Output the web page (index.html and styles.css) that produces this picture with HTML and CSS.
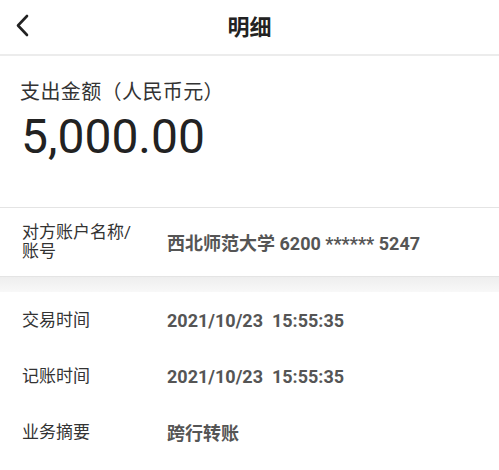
FILE: index.html
```html
<!DOCTYPE html>
<html lang="zh-CN">

<head>
    <meta charset="utf-8">
    <meta name="viewport" content="width=device-width, initial-scale=1.0">
    <title>明细</title>
    <link rel="stylesheet" href="styles.css">
</head>

<body>
    <header class="topbar">
        <button class="tilbage" aria-label="返回">
            <svg width="16" height="24" viewBox="0 0 16 24">
                <polyline points="12,2 3,11.5 12,21" fill="none" stroke="#222" stroke-width="2.6" stroke-linecap="round" stroke-linejoin="round" />
            </svg>
        </button>
        <h1>明细</h1>
    </header>

    <section class="beloeb">
        <p class="beloeb-tekst">支出金额（人民币元）</p>
        <p class="beloeb-tal">5,000.00</p>
    </section>

    <section class="modpart">
        <span class="navn">对方账户名称/<br>账号</span>
        <span class="vaerdi">西北师范大学 6200 ****** 5247</span>
    </section>

    <div class="skygge"></div>

    <section class="detaljer">
        <div class="raekke">
            <span class="navn">交易时间</span>
            <span class="vaerdi">2021/10/23&nbsp; 15:55:35</span>
        </div>
        <div class="raekke">
            <span class="navn">记账时间</span>
            <span class="vaerdi">2021/10/23&nbsp; 15:55:35</span>
        </div>
        <div class="raekke">
            <span class="navn">业务摘要</span>
            <span class="vaerdi">跨行转账</span>
        </div>
    </section>
</body></html>
```

FILE: styles.css
```css
* {
    box-sizing: border-box;
}

body {
    margin: 0;
    background-color: #fff;
    font-family: Roboto, "Noto Sans CJK SC", sans-serif;
    color: #333;
}

p {
    margin: 0;
}

.topbar {
    position: relative;
    height: 56px;
    padding-bottom: 4px;
    border-bottom: 2px solid #ececec;
    display: flex;
    align-items: center;
    justify-content: center;
}

.topbar h1 {
    margin: 0;
    font-size: 22px;
    font-weight: bold;
    color: #222;
}

.tilbage {
    position: absolute;
    left: 15px;
    top: 14px;
    border: 0;
    padding: 0;
    background: none;
    cursor: pointer;
    display: flex;
}

.beloeb {
    padding: 22px 22px 0 20px;
    height: 152px;
    border-bottom: 1px solid #e4e4e4;
}

.beloeb-tekst {
    font-size: 20px;
    letter-spacing: 0.4px;
    line-height: 28px;
    color: #333;
}

.beloeb-tal {
    margin-top: 3px;
    padding-left: 1px;
    font-size: 48px;
    line-height: 56px;
    color: #222;
}

.modpart {
    display: flex;
    align-items: center;
    height: 69px;
    padding: 0 22px;
    border-bottom: 1px solid #e4e4e4;
}

.navn {
    width: 145px;
    flex-shrink: 0;
    font-size: 17px;
    line-height: 19px;
    color: #333;
}

.vaerdi {
    font-size: 18px;
    font-weight: bold;
    color: #555;
}

.skygge {
    height: 15px;
    background: linear-gradient(#eeeeee, #f8f8f8);
}

.raekke {
    display: flex;
    align-items: center;
    height: 56px;
    padding: 0 22px;
}
```
